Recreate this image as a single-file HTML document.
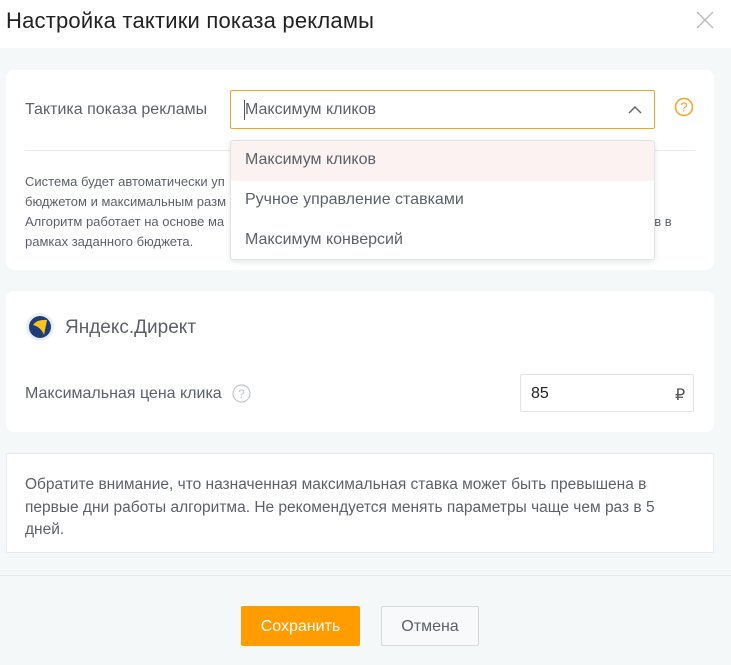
<!DOCTYPE html>
<html><head><meta charset="utf-8"><style>
*{box-sizing:border-box;margin:0;padding:0}
body{width:731px;height:665px;background:#f5f8f9;font-family:"Liberation Sans",sans-serif;color:#5c6168;position:relative;overflow:hidden}
.a{position:absolute;white-space:nowrap}
.hdr{left:0;top:0;width:731px;height:48px;background:#fff}
.card{background:#fff;border-radius:8px}
</style></head><body>
<div class="a hdr"></div>
<div class="a" style="left:6px;top:8px;font-size:22px;color:#222;letter-spacing:0.2px">Настройка тактики показа рекламы</div>
<svg class="a" style="left:696px;top:11px" width="18" height="18"><path d="M1 1L17 17M17 1L1 17" stroke="#b9bec4" stroke-width="1.5"/></svg>

<div class="a card" style="left:6px;top:70px;width:708px;height:200px"></div>
<div class="a" style="left:25px;top:101px;font-size:16px">Тактика показа рекламы</div>
<div class="a" style="left:230px;top:90px;width:425px;height:39px;border:1px solid #f7a21b;border-radius:2px;background:#fff"></div>
<div class="a" style="left:244px;top:100px;width:1px;height:20px;background:#555"></div>
<div class="a" style="left:245px;top:101px;font-size:16px">Максимум кликов</div>
<svg class="a" style="left:628px;top:105px" width="14" height="9"><path d="M1 8L7 2L13 8" stroke="#666" stroke-width="1.5" fill="none"/></svg>
<svg class="a" style="left:674px;top:97px" width="20" height="20"><circle cx="10" cy="10" r="8.5" stroke="#f7a21b" stroke-width="1.5" fill="none"/><text x="10" y="14.5" text-anchor="middle" font-size="13" fill="#f7a21b" font-family="Liberation Sans">?</text></svg>
<div class="a" style="left:25px;top:150px;width:670px;height:1px;background:#e6eaec"></div>
<div class="a" style="left:25px;top:172px;font-size:13px;line-height:20px;width:660px">Система будет автоматически уп<br>бюджетом и максимальным разм<br>Алгоритм работает на основе ма<span style="position:absolute;left:622px">ов в</span><br>рамках заданного бюджета.</div>
<div class="a" style="left:230px;top:140px;width:425px;height:120px;background:#fff;border:1px solid #dfe3e6;border-radius:3px;box-shadow:0 2px 6px rgba(0,0,0,.1);overflow:hidden">
<div style="height:40px;background:#fcf2f2;padding:10px 0 0 14px;font-size:16px">Максимум кликов</div>
<div style="height:40px;padding:10px 0 0 14px;font-size:16px">Ручное управление ставками</div>
<div style="height:40px;padding:10px 0 0 14px;font-size:16px">Максимум конверсий</div>
</div>

<div class="a card" style="left:6px;top:291px;width:708px;height:141px"></div>
<svg class="a" style="left:25px;top:312px" width="30" height="30"><circle cx="15" cy="15" r="14" fill="#e9eef0"/><circle cx="15" cy="15" r="11" fill="#1d3c78"/><path d="M8 13 Q12 7 22 8 L19 23 Q16 15 8 13Z" fill="#f7c51b"/></svg>
<div class="a" style="left:65px;top:317px;font-size:19px;color:#5c6168">Яндекс.Директ</div>
<div class="a" style="left:25px;top:385px;font-size:16px">Максимальная цена клика</div>
<svg class="a" style="left:232px;top:384px" width="19" height="19"><circle cx="9.5" cy="9.5" r="8.5" stroke="#c2c6ca" stroke-width="1.2" fill="none"/><text x="9.5" y="14" text-anchor="middle" font-size="12" fill="#c2c6ca" font-family="Liberation Sans">?</text></svg>
<div class="a" style="left:520px;top:374px;width:174px;height:38px;border:1px solid #dfe3e6;border-radius:2px;background:#fff"></div>
<div class="a" style="left:531px;top:385px;font-size:16px;color:#222">85</div>
<div class="a" style="left:675px;top:385px;font-size:16px;color:#555">₽</div>

<div class="a" style="left:6px;top:453px;width:708px;height:100px;background:#fff;border:1px solid #e6eaec;border-radius:2px"></div>
<div class="a" style="left:25px;top:474px;width:680px;font-size:15.5px;line-height:22.5px">Обратите внимание, что назначенная максимальная ставка может быть превышена в<br>первые дни работы алгоритма. Не рекомендуется менять параметры чаще чем раз в 5<br>дней.</div>

<div class="a" style="left:0;top:575px;width:731px;height:1px;background:#e6eaec"></div>
<div class="a" style="left:241px;top:606px;width:119px;height:40px;background:#ff9c00;border-radius:2px;color:#fff;font-size:16px;text-align:center;line-height:42px">Сохранить</div>
<div class="a" style="left:381px;top:606px;width:98px;height:40px;border:1px solid #d6dadd;border-radius:2px;background:#f7f9fa;font-size:16px;text-align:center;line-height:40px">Отмена</div>
</body></html>
